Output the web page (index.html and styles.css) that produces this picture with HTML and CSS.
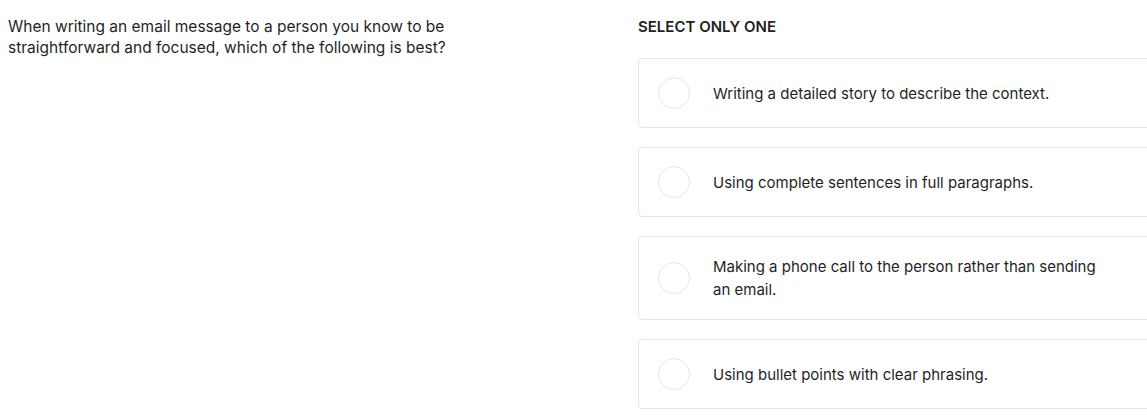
FILE: index.html
```html
<!DOCTYPE html>
<html lang="en">
<head>
<meta charset="utf-8">
<title>Question</title>
<link rel="stylesheet" href="styles.css">
</head>
<body>
<div class="layout">
  <div class="question">
    <p class="prompt">When writing an email message to a person you know to be straightforward and focused, which of the following is best?</p>
  </div>
  <div class="answers">
    <div class="instruction">SELECT ONLY ONE</div>
    <div class="options">
      <label class="option"><span class="radio"></span><span class="label">Writing a detailed story to describe the context.</span></label>
      <label class="option"><span class="radio"></span><span class="label">Using complete sentences in full paragraphs.</span></label>
      <label class="option"><span class="radio"></span><span class="label">Making a phone call to the person rather than sending an email.</span></label>
      <label class="option"><span class="radio"></span><span class="label">Using bullet points with clear phrasing.</span></label>
    </div>
  </div>
</div>
</body>
</html>
```

FILE: styles.css
```css
html, body {
  margin: 0;
  padding: 0;
  background: #ffffff;
  overflow: hidden;
}
body {
  font-family: "Inter", "Open Sans", "Liberation Sans", sans-serif;
  color: #1f1f1f;
  font-size: 15px;
}
.layout {
  display: grid;
  grid-template-columns: 638px 560px;
  padding-top: 12px;
}
.question {
  padding-left: 8px;
  padding-top: 4px;
}
.prompt {
  margin: 0;
  width: 500px;
  line-height: 21px;
  font-size: 15.5px;
}
.instruction {
  font-size: 15px;
  font-weight: 600;
  line-height: 20px;
  margin-top: 5px;
  margin-bottom: 21px;
}
.options {
  display: flex;
  flex-direction: column;
  gap: 19px;
}
.option {
  display: flex;
  align-items: center;
  border: 1px solid #e4e4e4;
  border-radius: 4px;
  padding: 18px 20px 18px 19px;
  min-height: 32px;
}
.radio {
  flex: none;
  width: 30px;
  height: 30px;
  border: 1.5px solid #e6e6e6;
  border-radius: 50%;
  margin-right: 23px;
}
.label {
  line-height: 23px;
  width: 385px;
}
```
